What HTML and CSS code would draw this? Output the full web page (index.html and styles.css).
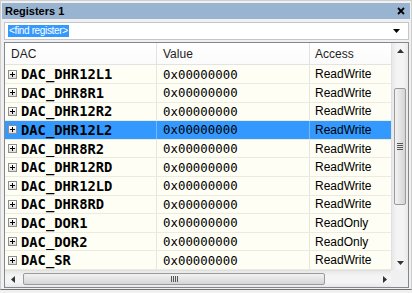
FILE: index.html
```html
<!DOCTYPE html>
<html>
<head>
  <title>Registers 1</title>
  <meta name="viewport" content="width=device-width, initial-scale=1.0">
  <link rel="stylesheet" href="styles.css">
</head>
<body>
  <div class="window">
    <div class="titlebar">
      <span class="title">Registers 1</span>
      <svg class="close" width="8" height="8" viewBox="0 0 8 8"><path d="M1 1L7 7M7 1L1 7" stroke="#000" stroke-width="1.8"/></svg>
    </div>

    <div class="find">
      <span class="find-text">&lt;find register&gt;</span>
      <svg class="drop" width="7" height="4" viewBox="0 0 7 4"><path d="M0 0H7L3.5 4Z" fill="#000"/></svg>
    </div>

    <div class="grid">
      <div class="view">
        <div class="row header">
          <div class="cell name">DAC</div>
          <div class="cell value">Value</div>
          <div class="cell access">Access</div>
        </div>

        <div class="row">
          <div class="cell name"><span class="plus"></span>DAC_DHR12L1</div>
          <div class="cell value">0x00000000</div>
          <div class="cell access">ReadWrite</div>
        </div>
        <div class="row">
          <div class="cell name"><span class="plus"></span>DAC_DHR8R1</div>
          <div class="cell value">0x00000000</div>
          <div class="cell access">ReadWrite</div>
        </div>
        <div class="row">
          <div class="cell name"><span class="plus"></span>DAC_DHR12R2</div>
          <div class="cell value">0x00000000</div>
          <div class="cell access">ReadWrite</div>
        </div>
        <div class="row selected">
          <div class="cell name"><span class="plus"></span>DAC_DHR12L2</div>
          <div class="cell value">0x00000000</div>
          <div class="cell access">ReadWrite</div>
        </div>
        <div class="row">
          <div class="cell name"><span class="plus"></span>DAC_DHR8R2</div>
          <div class="cell value">0x00000000</div>
          <div class="cell access">ReadWrite</div>
        </div>
        <div class="row">
          <div class="cell name"><span class="plus"></span>DAC_DHR12RD</div>
          <div class="cell value">0x00000000</div>
          <div class="cell access">ReadWrite</div>
        </div>
        <div class="row">
          <div class="cell name"><span class="plus"></span>DAC_DHR12LD</div>
          <div class="cell value">0x00000000</div>
          <div class="cell access">ReadWrite</div>
        </div>
        <div class="row">
          <div class="cell name"><span class="plus"></span>DAC_DHR8RD</div>
          <div class="cell value">0x00000000</div>
          <div class="cell access">ReadWrite</div>
        </div>
        <div class="row">
          <div class="cell name"><span class="plus"></span>DAC_DOR1</div>
          <div class="cell value">0x00000000</div>
          <div class="cell access">ReadOnly</div>
        </div>
        <div class="row">
          <div class="cell name"><span class="plus"></span>DAC_DOR2</div>
          <div class="cell value">0x00000000</div>
          <div class="cell access">ReadOnly</div>
        </div>
        <div class="row">
          <div class="cell name"><span class="plus"></span>DAC_SR</div>
          <div class="cell value">0x00000000</div>
          <div class="cell access">ReadWrite</div>
        </div>
      </div>

      <div class="vscroll">
        <svg class="arrow" width="7" height="4" viewBox="0 0 7 4"><path d="M0 4H7L3.5 0Z" fill="#333"/></svg>
        <div class="vthumb"><span class="grip"></span></div>
        <svg class="arrow" width="7" height="4" viewBox="0 0 7 4"><path d="M0 0H7L3.5 4Z" fill="#333"/></svg>
      </div>

      <div class="hscroll">
        <svg class="arrow" width="4" height="7" viewBox="0 0 4 7"><path d="M4 0V7L0 3.5Z" fill="#333"/></svg>
        <div class="hthumb"><span class="grip"></span></div>
        <svg class="arrow" width="4" height="7" viewBox="0 0 4 7"><path d="M0 0V7L4 3.5Z" fill="#333"/></svg>
      </div>

      <div class="corner"></div>
    </div>
  </div>
</body>
</html>
```

FILE: styles.css
```css
    body {
      margin: 0;
      background-color: #f0f0f0;
      font-family: 'Liberation Sans', Arial, sans-serif;
      overflow: hidden;
    }

    .window {
      width: 412px;
      height: 290px;
      box-sizing: border-box;
      border: 1px solid #cfcfcf;
      border-bottom: 1px solid #707070;
      padding: 2px 1px 0 1px;
      background-color: #f0f0f0;
    }

    .titlebar {
      height: 16px;
      background-color: #99b4d1;
      display: flex;
      align-items: center;
      justify-content: space-between;
      padding: 0 5px 0 3px;
    }

    .title {
      font-size: 11px;
      font-weight: bold;
      color: #000;
    }

    .close {
      display: block;
    }

    .find {
      height: 18px;
      margin: 3px 1px 0 2px;
      box-sizing: border-box;
      border: 1px solid #c5c5c5;
      background-color: #ffffff;
      display: flex;
      align-items: center;
      justify-content: space-between;
      padding: 0 8px 0 3px;
    }

    .find-text {
      background-color: #3399ff;
      color: #ffffff;
      font-size: 10px;
      letter-spacing: -0.35px;
      line-height: 12px;
      padding: 0 1px;
    }

    .drop {
      display: block;
    }

    .grid {
      margin: 2px 1px 0 2px;
      border: 1px solid #828790;
      background-color: #ffffff;
      display: grid;
      grid-template-columns: 1fr 17px;
      grid-template-rows: 227px 17px;
    }

    .view {
      overflow: hidden;
      background-color: #fefef4;
    }

    .row {
      display: flex;
      height: 18.6px;
      box-sizing: border-box;
      border-bottom: 1px solid #ebebe0;
      white-space: nowrap;
    }

    .cell {
      display: flex;
      align-items: center;
      box-sizing: border-box;
      border-right: 1px solid #e6e6dc;
      overflow: hidden;
      flex-shrink: 0;
    }

    .name {
      width: 152px;
      padding-left: 3px;
      font-family: 'DejaVu Sans Mono', monospace;
      font-weight: bold;
      font-size: 13.8px;
      color: #000;
    }

    .value {
      width: 153px;
      padding-left: 6px;
      font-family: 'DejaVu Sans Mono', monospace;
      font-size: 12.4px;
      color: #000;
    }

    .access {
      width: 90px;
      padding-left: 5px;
      font-size: 12px;
      color: #000;
    }

    .header {
      height: 22.4px;
      background: linear-gradient(#ffffff, #fbfbfb);
      border-bottom: 1px solid #e3e3e3;
    }

    .header .cell {
      font-family: 'Liberation Sans', Arial, sans-serif;
      font-weight: normal;
      font-size: 12px;
      color: #1e1e1e;
      border-right: 1px solid #e3e3e3;
    }

    .header .name {
      padding-left: 6px;
    }

    .selected {
      background-color: #3399ff;
    }

    .selected .cell {
      border-right-color: #7ab8f5;
    }

    .plus {
      width: 9px;
      height: 9px;
      box-sizing: border-box;
      border: 1px solid #8f8f8f;
      background: linear-gradient(#ffffff, #dcdcdc);
      margin-right: 4px;
      position: relative;
      flex-shrink: 0;
    }

    .plus::before {
      content: '';
      position: absolute;
      left: 1px;
      top: 3px;
      width: 5px;
      height: 1px;
      background-color: #000;
    }

    .plus::after {
      content: '';
      position: absolute;
      left: 3px;
      top: 1px;
      width: 1px;
      height: 5px;
      background-color: #000;
    }

    .vscroll {
      background: linear-gradient(90deg, #e8e8e8, #f4f4f4 30%, #f4f4f4 70%, #e8e8e8);
      border-left: 1px solid #e0e0e0;
      display: flex;
      flex-direction: column;
      align-items: center;
      padding: 6px 0 5px 0;
      box-sizing: border-box;
    }

    .vthumb {
      width: 12px;
      height: 117px;
      margin: 35px 0 auto 0;
      box-sizing: border-box;
      border: 1px solid #9a9a9a;
      border-radius: 2px;
      background: linear-gradient(90deg, #f2f2f2, #e4e4e4 50%, #d4d4d4);
      display: flex;
      align-items: center;
      justify-content: center;
    }

    .vthumb .grip {
      width: 6px;
      height: 7px;
      background: repeating-linear-gradient(#555 0 1px, transparent 1px 2px);
    }

    .hscroll {
      background: linear-gradient(#e8e8e8, #f4f4f4 30%, #f4f4f4 70%, #e8e8e8);
      border-top: 1px solid #e0e0e0;
      display: flex;
      align-items: center;
      padding: 0 4px 0 6px;
      box-sizing: border-box;
    }

    .hthumb {
      width: 302px;
      height: 12px;
      margin: 0 auto 0 8px;
      box-sizing: border-box;
      border: 1px solid #9a9a9a;
      border-radius: 2px;
      background: linear-gradient(#f2f2f2, #e4e4e4 50%, #d4d4d4);
      display: flex;
      align-items: center;
      justify-content: center;
    }

    .hthumb .grip {
      width: 7px;
      height: 6px;
      background: repeating-linear-gradient(90deg, #555 0 1px, transparent 1px 2px);
    }

    .arrow {
      display: block;
    }

    .corner {
      background-color: #f0f0f0;
    }
```
